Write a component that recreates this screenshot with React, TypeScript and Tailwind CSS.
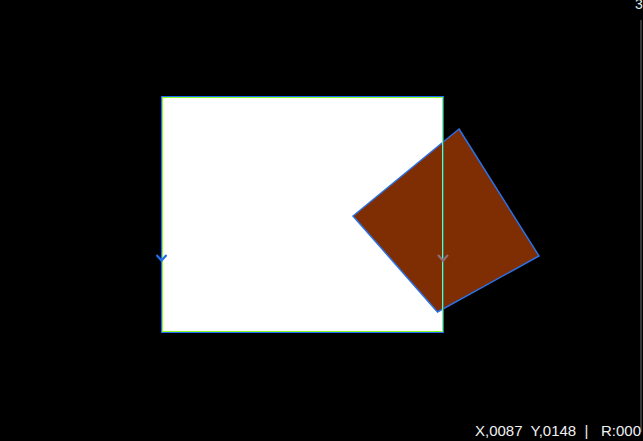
export default function App() {
  return (
    <div className="relative w-[643px] h-[441px] overflow-hidden bg-black font-['Liberation_Sans',Arial,sans-serif]">
      {/* canvas drawing */}
      <svg className="absolute inset-0" width="643" height="441" viewBox="0 0 643 441">
        {/* page rectangle */}
        <rect x="161" y="96" width="283" height="237" fill="#ffffff" />
        {/* rotated shape */}
        <polygon
          points="459,129 539,256 437.5,312 353,216"
          fill="#7f2d02"
          stroke="#2a72e8"
          strokeWidth="1.5"
          strokeLinejoin="miter"
        />
        {/* page border: blue outside, green inside */}
        <g shapeRendering="crispEdges" fill="none">
          <rect x="161.5" y="96.5" width="282" height="236" stroke="#1f6fff" strokeWidth="1" />
          <rect x="162.5" y="97.5" width="280" height="234" stroke="#8cff1e" strokeWidth="1" />
        </g>
        {/* margin markers */}
        <polyline points="156.5,255 161.5,260.5 166.5,255" fill="none" stroke="#1f6fe8" strokeWidth="2.2" />
        <polyline points="438,255 443,260.5 448,255" fill="none" stroke="#8c7078" strokeWidth="2.2" />
      </svg>

      {/* scroll track */}
      <div className="absolute left-[640px] top-[20px] w-[2px] h-[412px] bg-[#363636]" />

      {/* clipped ruler digit */}
      <span className="absolute left-[635px] top-[-3px] text-[14px] leading-none text-[#dfe9f5]">3</span>

      {/* status line */}
      <span className="absolute left-[475px] top-[423px] whitespace-pre text-[15px] leading-none text-[#f0f0f0]">
        X,0087  Y,0148  |   R:000
      </span>
    </div>
  );
}
